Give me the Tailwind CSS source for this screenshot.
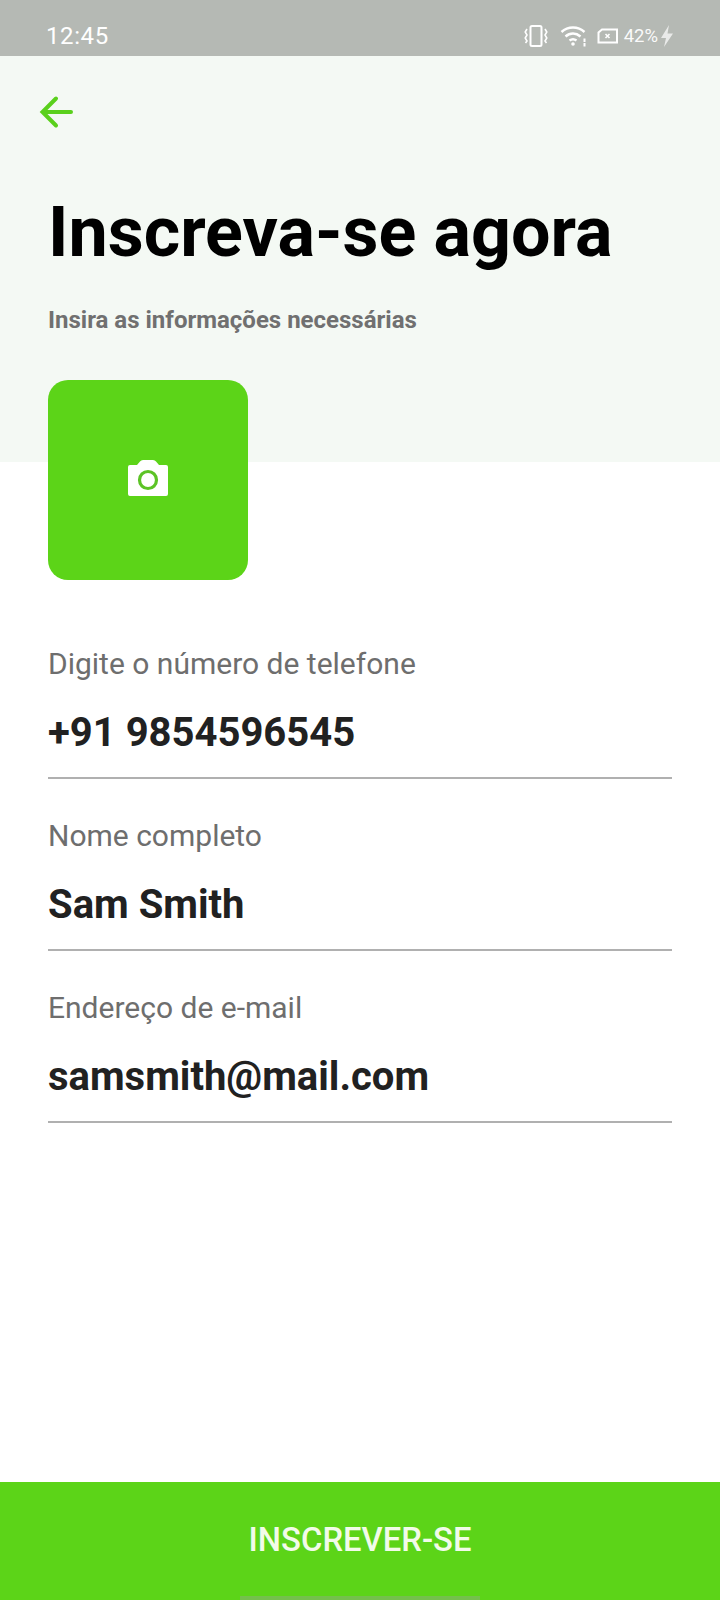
<!DOCTYPE html>
<html lang="pt">
<head>
<meta charset="utf-8">
<script src="https://cdn.jsdelivr.net/npm/@tailwindcss/browser@4"></script>
</head>
<body class="m-0">
<div class="w-[720px] h-[1600px] bg-white flex flex-col overflow-hidden font-['Roboto',sans-serif] relative">
  <div class="h-[56px] shrink-0 bg-[#b5b9b4] flex items-center justify-between pl-[46px] pr-[46px] text-white">
    <span class="text-[24px] tracking-[0.6px] font-normal leading-none mt-[15px]">12:45</span>
    <div class="flex items-center mt-[16px]">
      <svg width="24" height="24" viewBox="0 0 24 24" fill="none" stroke="#fff" stroke-width="2" class="mr-[12px]"><rect x="6.500" y="2" width="11" height="20" rx="1.500"/><path d="M3 5 L1.200 8 L3 11 L1.200 14 L3 17 L1.500 19" stroke-width="1.600"/><path d="M21 5 L22.800 8 L21 11 L22.800 14 L21 17 L22.500 19" stroke-width="1.600"/></svg>
      <svg width="28" height="22" viewBox="0 0 28 22" fill="none" stroke="#fff" stroke-width="2.400" class="mr-[9px]"><path d="M1.500 7 C8 1 18 1 24.500 7"/><path d="M5.500 11.500 C10 7.500 16 7.500 20.500 11.500"/><path d="M9.500 15.500 C11.500 14 14.500 14 16.500 15.500"/><circle cx="13" cy="19" r="1.800" fill="#fff" stroke="none"/><path d="M24.500 13.500v3.500M24.500 18v3.500" stroke-width="2"/></svg>
      <svg width="21" height="16" viewBox="0 0 21 16" fill="none" stroke="#fff" stroke-width="2" class="mr-[6px]"><path d="M5 1.500 H20 V14.500 H1.500 V4.500 Z"/><path d="M8.500 6 L12.500 10 M12.500 6 L8.500 10" stroke-width="1.600"/></svg>
      <span class="text-[18.500px] leading-none text-white/95 mt-[1px]">42%</span>
      <svg width="14" height="24" viewBox="0 0 14 24" class="ml-[2px]"><path d="M9 1 L1 14 H6 L4 23 L13 9.500 H7.500 Z" fill="#fff" fill-opacity=".7"/></svg>
    </div>
  </div>
  <div class="h-[406px] shrink-0 bg-[#f4f9f4] pl-[48px] flex flex-col">
    <svg width="36" height="34" viewBox="0 0 36 34" fill="none" stroke="#5ad01c" stroke-width="4" class="ml-[-9px] mt-[39px] shrink-0"><path d="M32 17 H4 M17 3.500 L3.500 17 L17 30.500" stroke-linecap="round"/></svg>
    <h1 class="text-[70px] font-bold text-black leading-none mt-[68px] mb-0 whitespace-nowrap">Inscreva-se agora</h1>
    <p class="text-[24px] font-bold text-[#707070] leading-none mt-[41px]">Insira as informações necessárias</p>
  </div>
  <div class="w-[200px] h-[200px] mt-[-82px] ml-[48px] shrink-0 rounded-[20px] bg-[#5cd418] flex items-center justify-center">
    <svg width="40" height="36" viewBox="0 0 40 36" class="mb-[4px]"><path d="M2 5 H9 L12 1.500 Q13 0 15 0 H25 Q27 0 28 1.500 L31 5 H38 a2 2 0 0 1 2 2 V34 a2 2 0 0 1 -2 2 H2 a2 2 0 0 1 -2 -2 V7 a2 2 0 0 1 2 -2 Z" fill="#fff"/><circle cx="20" cy="20" r="8.500" fill="none" stroke="#5cc326" stroke-width="3.200"/></svg>
  </div>
  <div class="px-[48px] flex flex-col mt-[67px]">
    <div class="h-[172px] flex flex-col">
      <span class="text-[30px] text-[#6e6e6e] leading-[34px]">Digite o número de telefone</span>
      <span class="text-[40px] font-bold text-[#212121] leading-[48px] mt-[28px]">+91 9854596545</span>
      <div class="h-[2px] bg-[#b0b0b0] mt-[20px]"></div>
    </div>
    <div class="h-[172px] flex flex-col">
      <span class="text-[30px] text-[#6e6e6e] leading-[34px]">Nome completo</span>
      <span class="text-[40px] font-bold text-[#212121] leading-[48px] mt-[28px]">Sam Smith</span>
      <div class="h-[2px] bg-[#b0b0b0] mt-[20px]"></div>
    </div>
    <div class="h-[172px] flex flex-col">
      <span class="text-[30px] text-[#6e6e6e] leading-[34px]">Endereço de e-mail</span>
      <span class="text-[40px] font-bold text-[#212121] leading-[48px] mt-[28px]">samsmith@mail.com</span>
      <div class="h-[2px] bg-[#b0b0b0] mt-[20px]"></div>
    </div>
  </div>
  <div class="mt-auto h-[118px] bg-[#5cd418] flex items-start justify-center relative">
    <span class="text-[32.800px] font-medium text-[#f2fbe9] leading-none mt-[42px]">INSCREVER-SE</span>
    <div class="absolute bottom-0 left-[240px] w-[240px] h-[4px] bg-[#74c04c]"></div>
  </div>
</div>
</body>
</html>
